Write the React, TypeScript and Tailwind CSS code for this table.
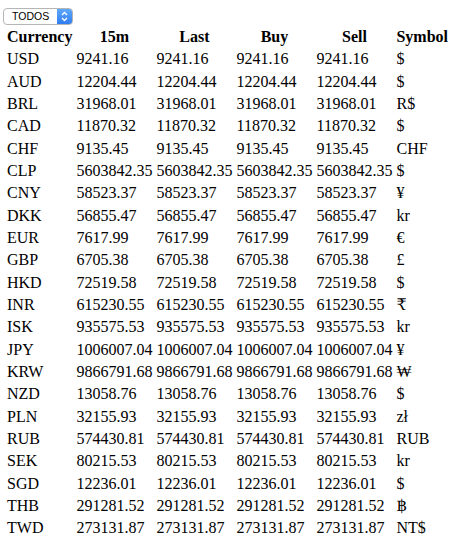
import React from 'react';

interface Rate {
  code: string;
  value: string;
  symbol: string;
}

const rates: Rate[] = [
  { code: 'USD', value: '9241.16', symbol: '$' },
  { code: 'AUD', value: '12204.44', symbol: '$' },
  { code: 'BRL', value: '31968.01', symbol: 'R$' },
  { code: 'CAD', value: '11870.32', symbol: '$' },
  { code: 'CHF', value: '9135.45', symbol: 'CHF' },
  { code: 'CLP', value: '5603842.35', symbol: '$' },
  { code: 'CNY', value: '58523.37', symbol: '¥' },
  { code: 'DKK', value: '56855.47', symbol: 'kr' },
  { code: 'EUR', value: '7617.99', symbol: '€' },
  { code: 'GBP', value: '6705.38', symbol: '£' },
  { code: 'HKD', value: '72519.58', symbol: '$' },
  { code: 'INR', value: '615230.55', symbol: '₹' },
  { code: 'ISK', value: '935575.53', symbol: 'kr' },
  { code: 'JPY', value: '1006007.04', symbol: '¥' },
  { code: 'KRW', value: '9866791.68', symbol: '₩' },
  { code: 'NZD', value: '13058.76', symbol: '$' },
  { code: 'PLN', value: '32155.93', symbol: 'zł' },
  { code: 'RUB', value: '574430.81', symbol: 'RUB' },
  { code: 'SEK', value: '80215.53', symbol: 'kr' },
  { code: 'SGD', value: '12236.01', symbol: '$' },
  { code: 'THB', value: '291281.52', symbol: '฿' },
  { code: 'TWD', value: '273131.87', symbol: 'NT$' },
];

const headers = ['Currency', '15m', 'Last', 'Buy', 'Sell', 'Symbol'];

const FakeSelect: React.FC = () => (
  <div className="flex w-[70px] h-[17px] ml-[3px] mt-2 rounded-[4px] border border-[#b5b5b5] bg-white overflow-hidden">
    <span className="flex-1 pl-[8px] text-[10.5px] leading-[15px] text-black font-['Liberation_Sans',Arial,sans-serif]">
      TODOS
    </span>
    <span className="w-[15px] flex items-center justify-center bg-gradient-to-b from-[#5fa8fb] to-[#2f7cf0]">
      <svg width="7" height="11" viewBox="0 0 7 11" fill="none" stroke="white" strokeWidth="1.3">
        <path d="M1 4 L3.5 1.5 L6 4" />
        <path d="M1 7 L3.5 9.5 L6 7" />
      </svg>
    </span>
  </div>
);

export default function App() {
  return (
    <div className="bg-white min-h-screen text-black font-['Liberation_Serif','DejaVu_Serif',serif] text-[16px] leading-[18.33px]">
      <FakeSelect />
      <table className="ml-1 border-separate border-spacing-[2px]">
        <thead>
          <tr>
            {headers.map((h) => (
              <th key={h} className="p-px font-bold text-center">
                {h}
              </th>
            ))}
          </tr>
        </thead>
        <tbody>
          {rates.map((r) => (
            <tr key={r.code}>
              <td className="p-px">{r.code}</td>
              <td className="p-px">{r.value}</td>
              <td className="p-px">{r.value}</td>
              <td className="p-px">{r.value}</td>
              <td className="p-px">{r.value}</td>
              <td className="p-px">{r.symbol}</td>
            </tr>
          ))}
        </tbody>
      </table>
    </div>
  );
}
